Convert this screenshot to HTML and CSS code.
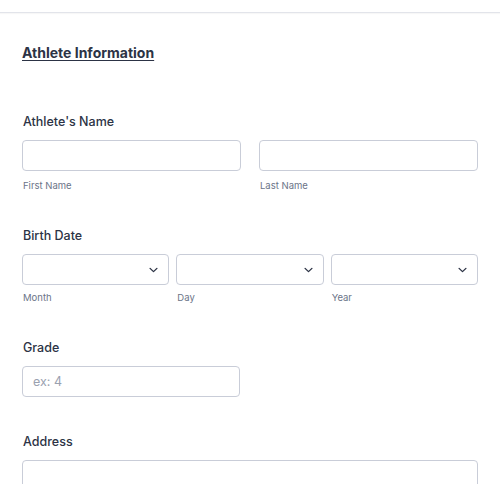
FILE: index.html
```html
<!DOCTYPE html>
<html>
<head>
<meta charset="utf-8">
<link rel="stylesheet" href="styles.css">
</head>
<body>
<div class="topbar"></div>
<main class="form">
  <h2 class="heading">Athlete Information</h2>

  <section class="field first">
    <div class="label">Athlete's Name</div>
    <div class="row two">
      <div class="col">
        <div class="box"></div>
        <div class="sub">First Name</div>
      </div>
      <div class="col">
        <div class="box"></div>
        <div class="sub">Last Name</div>
      </div>
    </div>
  </section>

  <section class="field">
    <div class="label">Birth Date</div>
    <div class="row three">
      <div class="col">
        <div class="box select"><svg class="chev" viewBox="0 0 10 6" width="9" height="6"><path d="M1.2 1.2l3.8 3.6 3.8-3.6" fill="none" stroke="#2c3345" stroke-width="1.5" stroke-linecap="round" stroke-linejoin="round"/></svg></div>
        <div class="sub s2">Month</div>
      </div>
      <div class="col">
        <div class="box select"><svg class="chev" viewBox="0 0 10 6" width="9" height="6"><path d="M1.2 1.2l3.8 3.6 3.8-3.6" fill="none" stroke="#2c3345" stroke-width="1.5" stroke-linecap="round" stroke-linejoin="round"/></svg></div>
        <div class="sub s2">Day</div>
      </div>
      <div class="col">
        <div class="box select"><svg class="chev" viewBox="0 0 10 6" width="9" height="6"><path d="M1.2 1.2l3.8 3.6 3.8-3.6" fill="none" stroke="#2c3345" stroke-width="1.5" stroke-linecap="round" stroke-linejoin="round"/></svg></div>
        <div class="sub s2">Year</div>
      </div>
    </div>
  </section>

  <section class="field grade">
    <div class="label">Grade</div>
    <div class="box short"><span class="ph">ex: 4</span></div>
  </section>

  <section class="field address">
    <div class="label">Address</div>
    <div class="box"></div>
  </section>
</main>
</body>
</html>
```

FILE: styles.css
```css
* { box-sizing: border-box; }
html, body { margin: 0; padding: 0; background: #fff; }
body {
  font-family: Inter, "Noto Sans", "Liberation Sans", sans-serif;
  color: #2c3345;
  overflow: hidden;
}
.topbar {
  height: 13px;
  border-bottom: 1px solid #e2e4ea;
  box-shadow: 0 1px 1px rgba(0,0,0,0.03);
}
.form {
  padding: 30px 22px 0 22px;
}
.heading {
  margin: 0;
  font-size: 14px;
  line-height: 20px;
  font-weight: 700;
  text-decoration: underline;
  text-underline-offset: 2px;
  text-decoration-thickness: 1px;
}
.field { margin-top: 34px; }
.field.first { margin-top: 50px; }
.field.grade { margin-top: 34px; }
.field.address { margin-top: 36px; }
.label {
  padding-left: 1px;
  font-size: 12.5px;
  line-height: 18px;
  font-weight: 500;
  margin-bottom: 9px;
}
.row { display: grid; }
.row.two { grid-template-columns: 1fr 1fr; column-gap: 18px; }
.row.three { grid-template-columns: 1fr 1fr 1fr; column-gap: 7px; }
.box {
  height: 31px;
  border: 1px solid #c9cdd8;
  border-radius: 4px;
  background: #fff;
  display: flex;
  align-items: center;
}
.box.select { justify-content: flex-end; padding-right: 10px; }
.box.short { width: 218px; padding-left: 10px; }
.ph { font-size: 12.5px; color: #9aa1b0; }
.sub {
  padding-left: 1px;
  margin-top: 8px;
  font-size: 9.5px;
  line-height: 14px;
  color: #6b7488;
}
.sub.s2 { margin-top: 6px; }
```
